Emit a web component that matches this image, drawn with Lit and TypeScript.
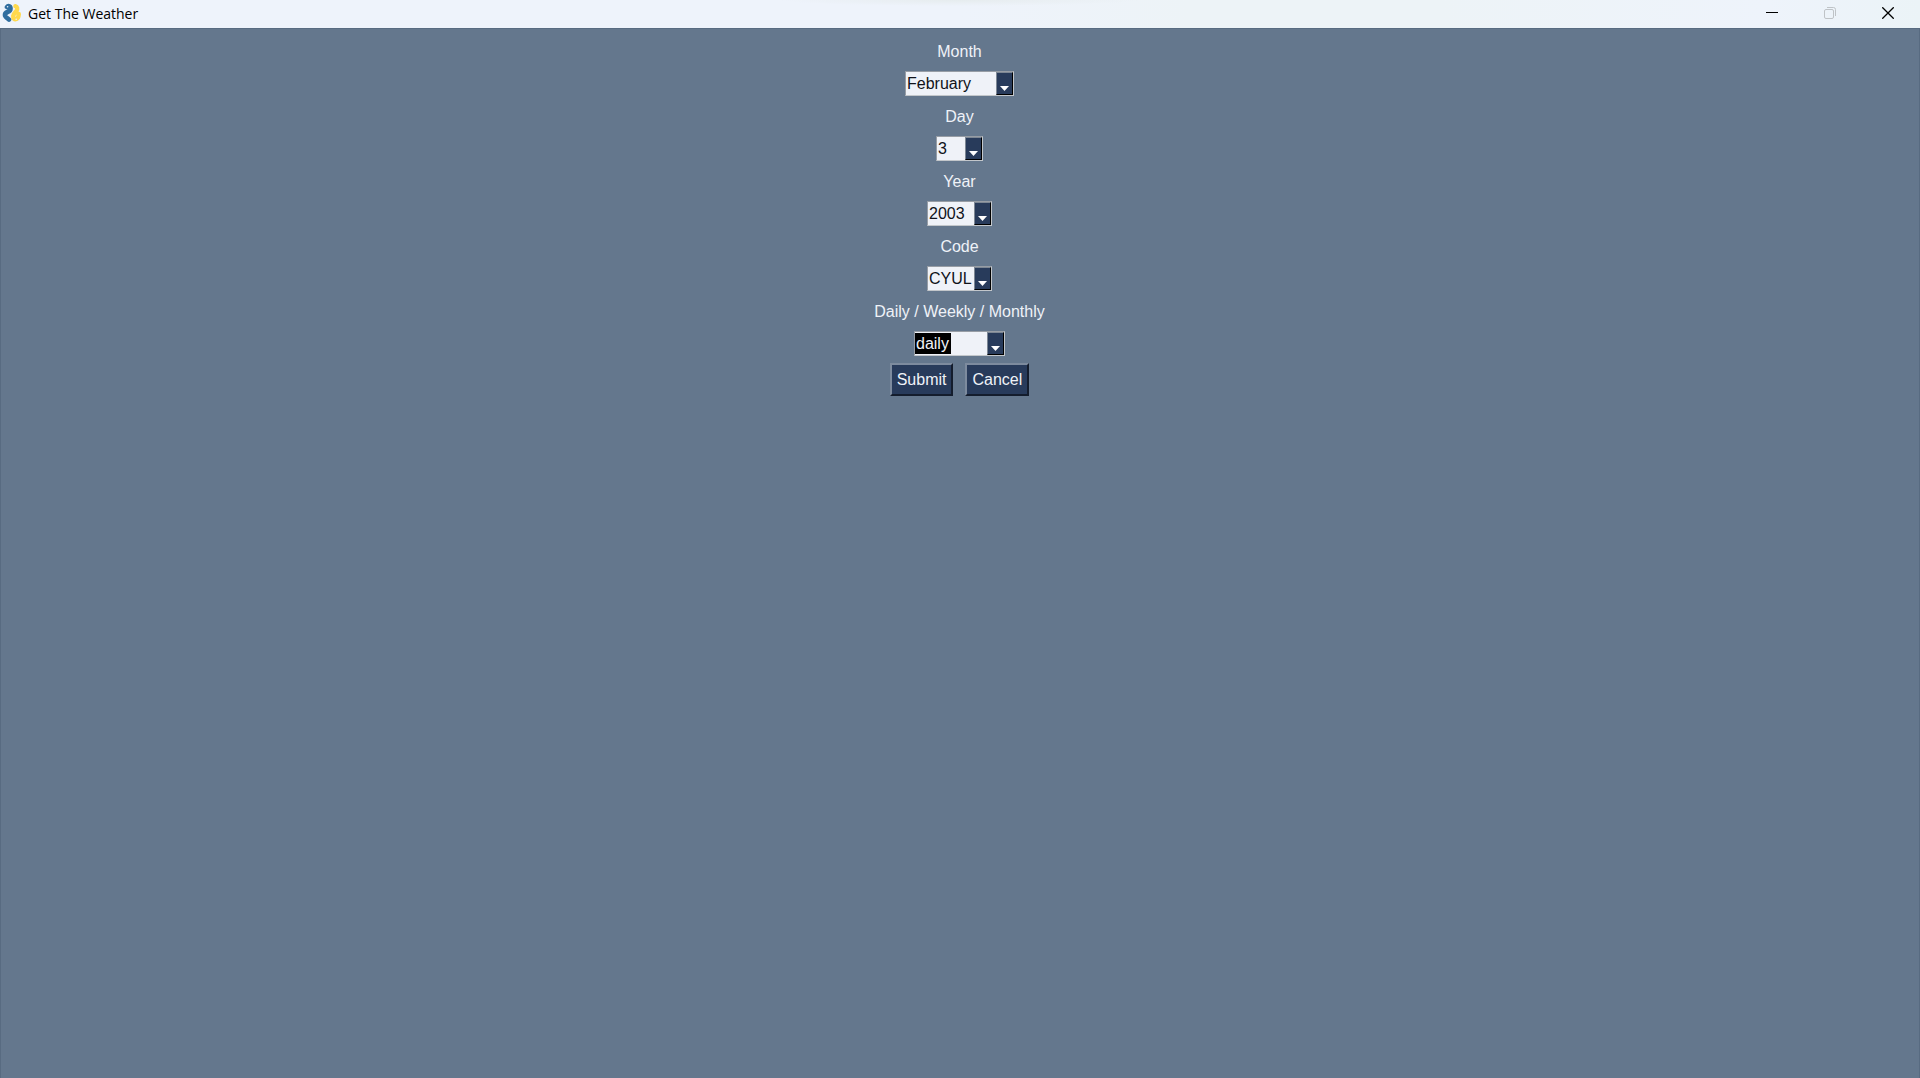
import { LitElement, html, css, svg } from "lit";
import { customElement } from "lit/decorators.js";
import { classMap } from "lit/directives/class-map.js";

interface Field {
  id: string;
  label: string;
  value: string;
  options: string[];
  size: string;
  selected?: boolean;
}

const FIELDS: Field[] = [
  {
    id: "month",
    label: "Month",
    value: "February",
    size: "wide",
    options: ["January", "February", "March", "April", "May", "June", "July", "August", "September", "October", "November", "December"],
  },
  { id: "day", label: "Day", value: "3", size: "tiny", options: Array.from({ length: 31 }, (_, i) => String(i + 1)) },
  { id: "year", label: "Year", value: "2003", size: "small", options: Array.from({ length: 24 }, (_, i) => String(2000 + i)) },
  { id: "code", label: "Code", value: "CYUL", size: "small", options: ["CYUL", "CYYZ", "CYVR"] },
  { id: "period", label: "Daily / Weekly / Monthly", value: "daily", size: "medium", selected: true, options: ["daily", "weekly", "monthly"] },
];

@customElement("app-root")
export class AppRoot extends LitElement {
  static styles = css`
    :host {
      display: flex;
      flex-direction: column;
      min-height: 100vh;
      font-family: "Liberation Sans", Arial, sans-serif;
      font-size: 16px;
      background: #64778d;
    }
    .titlebar {
      display: flex;
      align-items: center;
      height: 28px;
      padding-right: 3px;
      background:
        radial-gradient(ellipse 180px 6px at 50% 0, #e6ecee, transparent),
        linear-gradient(90deg, #eef3fb 0%, #eef3fb 50%, #edf3f7 62%, #edf3f7 75%, #eef3fb 92%, #ebf3f7 100%);
    }
    .logo {
      width: 20px;
      height: 20px;
      margin: 0 6px 2px 2px;
    }
    .title {
      flex: 1;
      margin: 0;
      font: 400 14px/20px "Open Sans", "Noto Sans", sans-serif;
      color: #000;
    }
    .controls {
      display: flex;
    }
    .control {
      display: grid;
      place-items: center;
      width: 58px;
      height: 28px;
      padding: 0 0 2px;
      border: 0;
      background: none;
    }
    .control svg {
      display: block;
    }
    .client {
      flex: 1;
      display: flex;
      flex-direction: column;
      align-items: center;
      padding: 10px 1px 0 0;
      border: 1px solid #586b81;
      border-bottom: 0;
    }
    .field {
      display: flex;
      flex-direction: column;
      align-items: center;
      height: 65px;
    }
    .field label {
      line-height: 26px;
      margin-bottom: 6px;
      color: #eff2f8;
    }
    .combo {
      display: grid;
      grid-template-columns: 1fr 17px;
      height: 25px;
      box-sizing: border-box;
      border: 1px solid;
      border-color: #979da5 #c3c7cb #c3c7cb #979da5;
      background: #eff2f8;
    }
    .wide { width: 109px; }
    .medium { width: 91px; }
    .small { width: 65px; }
    .tiny { width: 47px; }
    select {
      grid-area: 1 / 1 / 2 / 3;
      appearance: none;
      width: 100%;
      height: 100%;
      margin: 0;
      padding: 0 0 0 1px;
      border: 0;
      border-radius: 0;
      outline: 0;
      background: none;
      color: #10131a;
      font: inherit;
    }
    .picked select {
      color: #eff2f8;
      background: linear-gradient(#000, #000) 0 1px / 36px 21px no-repeat;
    }
    option {
      color: #10131a;
      background: #eff2f8;
    }
    .arrow {
      grid-area: 1 / 2 / 2 / 3;
      display: grid;
      place-items: end center;
      padding-bottom: 3px;
      border: 1px solid;
      border-color: #7d8794 #000 #000 #7d8794;
      background: #283b5b;
      pointer-events: none;
    }
    .actions {
      display: flex;
      gap: 12px;
      margin-top: -1px;
    }
    .action {
      height: 33px;
      padding: 0 5px;
      border: 2px solid;
      border-color: #7d8b9e #141d2d #141d2d #7d8b9e;
      border-radius: 0;
      background: #283b5b;
      color: #eff2f8;
      font: inherit;
    }
  `;

  private renderLogo() {
    return svg`<svg class="logo" viewBox="0 0 20 20" fill="none" stroke-linecap="round" stroke-linejoin="round" aria-hidden="true">
      <path d="M5 4C6 2.600 8.300 2.800 8.500 5C8.700 7.600 7.600 8.300 5.600 9C3.400 9.800 2.600 11 3.200 13C3.800 14.500 5 14.600 7 16.600" stroke="#2f6d9f" stroke-width="4.600"/>
      <path d="M13.400 3.200C15.400 3.600 15.600 6 14.600 7.600C13.400 9.400 11.400 10.600 11.200 13C11 15.800 12.600 16.600 14.400 16C16.200 15.200 16.600 13.600 16.800 11" stroke="#ffd94d" stroke-width="4.400"/>
      <circle cx="5.600" cy="3.800" r=".8" fill="#eef3fb"/>
      <circle cx="14.200" cy="16.200" r=".8" fill="#eef3fb"/>
    </svg>`;
  }

  private renderField(field: Field) {
    return html`<div class="field">
      <label for=${field.id}>${field.label}</label>
      <div class=${classMap({ combo: true, [field.size]: true, picked: !!field.selected })}>
        <select id=${field.id} name=${field.id}>
          ${field.options.map((o) => html`<option ?selected=${o === field.value}>${o}</option>`)}
        </select>
        <span class="arrow">
          <svg width="9" height="5" viewBox="0 0 9 5" aria-hidden="true"><path d="M0 0H9L4.500 5Z" fill="#fff"/></svg>
        </span>
      </div>
    </div>`;
  }

  render() {
    return html`
      <header class="titlebar">
        ${this.renderLogo()}
        <h1 class="title">Get The Weather</h1>
        <div class="controls">
          <button class="control" type="button" aria-label="Minimize">
            <svg width="12" height="12" viewBox="0 0 12 12"><path d="M0 5.500H12" stroke="#000"/></svg>
          </button>
          <button class="control" type="button" aria-label="Restore" disabled>
            <svg width="12" height="12" viewBox="0 0 12 12" fill="none" stroke="#bfc3c7">
              <rect x=".5" y="2.500" width="9" height="9" rx="1.500"/>
              <path d="M3 .5H9.500A2 2 0 0 1 11.500 2.500V9"/>
            </svg>
          </button>
          <button class="control" type="button" aria-label="Close">
            <svg width="12" height="12" viewBox="0 0 12 12"><path d="M.3.3L11.700 11.700M11.700.3L.3 11.700" stroke="#000" stroke-width="1.300"/></svg>
          </button>
        </div>
      </header>
      <form class="client" @submit=${(e: Event) => e.preventDefault()}>
        ${FIELDS.map((f) => this.renderField(f))}
        <div class="actions">
          <button class="action" type="submit">Submit</button>
          <button class="action" type="button">Cancel</button>
        </div>
      </form>
    `;
  }
}
